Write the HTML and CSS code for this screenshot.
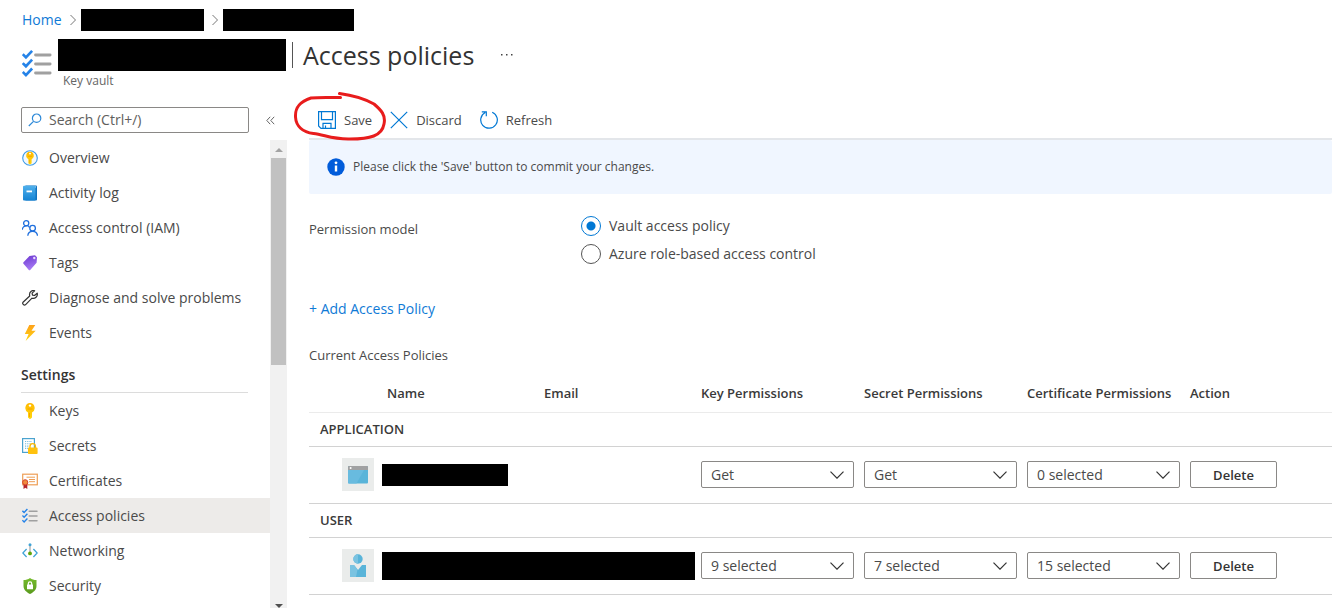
FILE: index.html
```html
<!DOCTYPE html>
<html lang="en">
<head>
<meta charset="utf-8">
<title>Access policies</title>
<link rel="stylesheet" href="styles.css">
</head>
<body>
<svg class="defs" aria-hidden="true">
  <defs>
    <linearGradient id="gKey" x1="0" y1="0" x2="0" y2="1"><stop offset="0" stop-color="#ffb900"/><stop offset="1" stop-color="#ffd70f"/></linearGradient>
    <linearGradient id="gBook" x1="0" y1="0" x2="0" y2="1"><stop offset="0" stop-color="#4fb0ec"/><stop offset="1" stop-color="#1583d3"/></linearGradient>
    <linearGradient id="gTag" x1="0" y1="0" x2="0.3" y2="1"><stop offset="0" stop-color="#6a35cf"/><stop offset="1" stop-color="#a67af4"/></linearGradient>
    <linearGradient id="gBolt" x1="0" y1="0" x2="0" y2="1"><stop offset="0" stop-color="#fea11b"/><stop offset="1" stop-color="#ffd70f"/></linearGradient>
    <linearGradient id="gShield" x1="0" y1="0" x2="0" y2="1"><stop offset="0" stop-color="#76bc2d"/><stop offset="1" stop-color="#5a9a1e"/></linearGradient>
    <symbol id="key" viewBox="0 0 16 16"><path d="M8 0a5 5 0 0 0-2 9.400V14.500L8 16.200l2-1.700V9.400A5 5 0 0 0 8 0z" fill="url(#gKey)"/><circle cx="8" cy="2.600" r="1.200" fill="#fff"/><path d="M5.500 6h5M7.500 10v4" stroke="#f29a00" stroke-width=".8"/></symbol>
    <symbol id="checks" viewBox="0 0 16 16"><path d="M.4 2.800l1.700 1.700L5.400 1M.4 7.500l1.700 1.700 3.300-3.500M.4 12.200l1.700 1.700 3.300-3.500" fill="none" stroke="#2583e8" stroke-width="1.400"/><path d="M7.200 3.200h7.800M7.200 8h7.800M7.200 12.800h7.800" stroke="#a0a0a0" stroke-width="1.500" stroke-linecap="round"/></symbol>
  </defs>
</svg>

<header class="page-header">
  <nav class="breadcrumb" aria-label="Breadcrumb">
    <a href="#">Home</a>
    <svg class="crumb-sep" viewBox="0 0 6 12"><path d="M.5 1l5 5-5 5"/></svg>
    <span class="redacted crumb-one"></span>
    <svg class="crumb-sep" viewBox="0 0 6 12"><path d="M.5 1l5 5-5 5"/></svg>
    <span class="redacted crumb-two"></span>
  </nav>
  <div class="title-row">
    <svg class="title-icon"><use href="#checks"/></svg>
    <div class="title-text">
      <div class="title-line">
        <span class="redacted vault-name"></span>
        <h1><span class="title-bar"></span>Access policies</h1>
        <button class="more" type="button" aria-label="More"><svg viewBox="0 0 14 4"><path d="M1 1h1.500v1.500H1zM6 1h1.500v1.500H6zM11 1h1.500v1.500H11z"/></svg></button>
      </div>
      <p class="subtitle">Key vault</p>
    </div>
  </div>
</header>

<div class="body">
  <aside class="sidebar">
    <div class="search-row">
      <label class="search">
        <svg viewBox="0 0 14 14"><circle cx="8.600" cy="5.200" r="4.200"/><path d="M5.500 8.300L.8 13"/></svg>
        <input type="text" placeholder="Search (Ctrl+/)" aria-label="Search">
      </label>
      <button class="collapse" type="button" aria-label="Collapse menu"><svg viewBox="0 0 9 9"><path d="M4.200.8L.8 4.500l3.400 3.700M8.200.8L4.800 4.500l3.400 3.700"/></svg></button>
    </div>
    <div class="menu-area">
      <nav class="menu" aria-label="Key vault menu">
        <a class="item" href="#"><svg viewBox="0 0 16 16"><circle cx="8" cy="8" r="7.300" fill="#f2f8fd" stroke="#3d9be6" stroke-width="1.100"/><use href="#key" x="1.500" y="1.500" width="13" height="13"/></svg>Overview</a>
        <a class="item" href="#"><svg viewBox="0 0 16 16"><rect x="3" y=".5" width="12" height="15" rx="1" fill="#1173c0"/><rect x="3" y="1.500" width="11" height="1" fill="#fff"/><path d="M2 .8h10.500a1 1 0 0 1 1 1v12.700a1 1 0 0 1-1 1H2a1 1 0 0 1-1-1V1.800a1 1 0 0 1 1-1z" fill="url(#gBook)"/><rect x="4.500" y="5.500" width="5.500" height="1.800" fill="#fff"/></svg>Activity log</a>
        <a class="item" href="#"><svg viewBox="0 0 16 16" fill="none" stroke="#1f6fdd" stroke-width="1.300"><circle cx="4.200" cy="3.300" r="2.600"/><path d="M.3 9.800c.3-5 6.400-5 7.200-2.200"/><circle cx="10.600" cy="8.200" r="2.800"/><path d="M5.800 15.800c.4-6 9.200-6 9.700 0"/></svg>Access control (IAM)</a>
        <a class="item" href="#"><svg viewBox="0 0 16 16"><path d="M1.500 7.200L7.500 1 13 .3l2 2-.4 5.500L8.200 15a1 1 0 0 1-1.400 0L1.500 8.700a1 1 0 0 1 0-1.500z" fill="url(#gTag)"/><circle cx="12.300" cy="3" r="1.200" fill="#e9dcff"/></svg>Tags</a>
        <a class="item" href="#"><svg viewBox="0 0 16 16" fill="none" stroke="#333" stroke-width="1.200" stroke-linejoin="round"><path d="M15.200 3.200l-2.700 2.300-2-.4-.4-2L12.600.7C10.500 0 7.400 1.400 7.500 4.700L7.700 6 1 12.300c-1 1.200.9 3.600 2.400 2.500L10 8.200c3 .9 6-1.600 5.200-5z"/></svg>Diagnose and solve problems</a>
        <a class="item" href="#"><svg viewBox="0 0 16 16"><path d="M7.300 0h6L9.500 5.800h4.200L3.600 16l3-7H2.800z" fill="url(#gBolt)"/></svg>Events</a>
        <h2 class="group-title">Settings</h2>
        <a class="item" href="#"><svg viewBox="0 0 16 16"><use href="#key" width="16" height="16"/></svg>Keys</a>
        <a class="item" href="#"><svg viewBox="0 0 16 16"><rect x=".6" y=".6" width="11.800" height="13.800" fill="#fff" stroke="#4ba3cf" stroke-width="1.200"/><path d="M3 3.500h7M3 5.800h7M3 8.100h4M3 10.400h3" stroke="#79bcdd" stroke-width="1.100" stroke-dasharray="1.200 1"/><path d="M8 10V8.300a2.700 2.700 0 0 1 5.400 0V10" fill="none" stroke="#ffb900" stroke-width="1.400"/><rect x="6" y="9.600" width="9.600" height="6.400" rx=".8" fill="#ffc20e"/></svg>Secrets</a>
        <a class="item" href="#"><svg viewBox="0 0 16 16"><rect x=".7" y="1.200" width="14.600" height="10.600" fill="#fff" stroke="#ee9e55" stroke-width="1.200"/><path d="M4.500 4.200h8.500M7 6.500h6M7 8.700h6" stroke="#ee9e55"/><path d="M1.500 10h3.800v6l-1.900-1.300L1.500 16z" fill="#b4232b"/><circle cx="3.200" cy="9.300" r="2.600" fill="#f08a3c" stroke="#d4412d"/></svg>Certificates</a>
        <a class="item selected" href="#" aria-current="page"><svg viewBox="0 0 16 16"><use href="#checks" width="16" height="16"/></svg>Access policies</a>
        <a class="item" href="#"><svg viewBox="0 0 16 16" fill="none"><path d="M4.600 6L.8 10l3.800 4M11.400 6l3.800 4-3.800 4" stroke="#3fa3d6" stroke-width="1.300"/><path d="M8 2v8" stroke="#999" stroke-width="1.100"/><circle cx="8" cy="1.700" r="1.500" fill="#3fa3d6"/><circle cx="8" cy="10.400" r="1.900" fill="#5ea70a"/></svg>Networking</a>
        <a class="item" href="#"><svg viewBox="0 0 16 16"><path d="M8 0c2 1.500 4 2 6.500 2v6c0 4-3.500 6.500-6.500 8-3-1.500-6.500-4-6.500-8V2C4 2 6 1.500 8 0z" fill="url(#gShield)"/><path d="M6.300 7V5.500a1.700 1.700 0 0 1 3.400 0V7" fill="none" stroke="#fff" stroke-width="1.200"/><rect x="5" y="6.600" width="6" height="4.600" rx=".5" fill="#fff"/></svg>Security</a>
      </nav>
      <div class="scrollbar" aria-hidden="true">
        <svg class="arrow-up" viewBox="0 0 8 4"><path d="M0 4l4-4 4 4z"/></svg>
        <div class="thumb"></div>
        <svg class="arrow-down" viewBox="0 0 8 4"><path d="M0 0h8L4 4z"/></svg>
      </div>
    </div>
  </aside>

  <main class="main">
    <div class="toolbar">
      <button type="button" class="tool"><svg viewBox="0 0 18 18"><path d="M.6.6h16.800v16.800H3L.6 15zM3.500.6v8h11v-8M5 17.400v-5h8v5M7.500 14.500v3"/></svg>Save</button>
      <button type="button" class="tool"><svg viewBox="0 0 18 18"><path d="M.8.8l16.400 16.400M17.200.8L.8 17.200"/></svg>Discard</button>
      <button type="button" class="tool refresh"><svg viewBox="0 0 18 18"><path d="M12.200 1.200A8.300 8.300 0 1 1 5.200 1.500M1.800.8h4.500v4.500"/></svg>Refresh</button>
      <svg class="scribble" viewBox="0 0 94 50" aria-hidden="true"><path d="M47.500 5.500C35 5.500 26 5 18 6 6 10 2 16 2.500 25c.5 9 7 15 18 16.500C32 43 40 47.500 57 47c20 0 32-3 34-15C93 23 88 18 81 12 72 7 58 3 46.500 1.500"/></svg>
    </div>

    <div class="notice" role="status">
      <svg viewBox="0 0 18 18"><circle cx="9" cy="9" r="8.700" fill="#015cda"/><path d="M7.800 7.500h2.400v6H7.800z" fill="#fff"/><circle cx="9" cy="4.800" r="1.400" fill="#fff"/></svg>
      Please click the 'Save' button to commit your changes.
    </div>

    <div class="model" role="radiogroup" aria-labelledby="model-label">
      <span id="model-label" class="model-label">Permission model</span>
      <div class="options">
        <label><input type="radio" name="model" checked>Vault access policy</label>
        <label><input type="radio" name="model">Azure role-based access control</label>
      </div>
    </div>

    <a class="add" href="#">+ Add Access Policy</a>
    <p class="caption" id="caption">Current Access Policies</p>

    <table class="policies" aria-labelledby="caption">
      <colgroup><col class="c-icon"><col class="c-name"><col class="c-name"><col class="c-perm"><col class="c-perm"><col class="c-perm"><col></colgroup>
      <thead>
        <tr><th></th><th>Name</th><th>Email</th><th>Key Permissions</th><th>Secret Permissions</th><th>Certificate Permissions</th><th>Action</th></tr>
      </thead>
      <tbody>
        <tr class="group"><th colspan="7">APPLICATION</th></tr>
        <tr class="entry">
          <td colspan="3"><div class="who"><span class="avatar"><svg viewBox="0 0 20 18"><rect width="20" height="17.500" rx="1" fill="#59b4d9"/><path d="M0 4h16L8.500 17.500H1a1 1 0 0 1-1-1z" fill="#68bbdf"/><path d="M1 0h18a1 1 0 0 1 1 1v3H0V1a1 1 0 0 1 1-1z" fill="#a0a1a2"/><circle cx="2.600" cy="2" r="1" fill="#fff"/></svg></span><span class="redacted app-name"></span></div></td>
          <td><span class="pick"><select aria-label="Key permissions"><option>Get</option></select><svg viewBox="0 0 14 8"><path d="M.5.7L7 7.200 13.500.7"/></svg></span></td>
          <td><span class="pick"><select aria-label="Secret permissions"><option>Get</option></select><svg viewBox="0 0 14 8"><path d="M.5.7L7 7.200 13.500.7"/></svg></span></td>
          <td><span class="pick"><select aria-label="Certificate permissions"><option>0 selected</option></select><svg viewBox="0 0 14 8"><path d="M.5.7L7 7.200 13.500.7"/></svg></span></td>
          <td><button type="button" class="delete">Delete</button></td>
        </tr>
        <tr class="group"><th colspan="7">USER</th></tr>
        <tr class="entry">
          <td colspan="3"><div class="who"><span class="avatar"><svg viewBox="0 0 18 24"><circle cx="9" cy="5" r="4.700" fill="#59b4d9"/><path d="M9 .3a4.700 4.700 0 0 0 0 9.400z" fill="#7ac3e1"/><path d="M1 11h4l4 5 4-5h4v12H1z" fill="#59b4d9"/><path d="M1 11h4l3.500 4.500L7 23H1z" fill="#7ac3e1"/></svg></span><span class="redacted user-name"></span></div></td>
          <td><span class="pick"><select aria-label="Key permissions"><option>9 selected</option></select><svg viewBox="0 0 14 8"><path d="M.5.7L7 7.200 13.500.7"/></svg></span></td>
          <td><span class="pick"><select aria-label="Secret permissions"><option>7 selected</option></select><svg viewBox="0 0 14 8"><path d="M.5.7L7 7.200 13.500.7"/></svg></span></td>
          <td><span class="pick"><select aria-label="Certificate permissions"><option>15 selected</option></select><svg viewBox="0 0 14 8"><path d="M.5.7L7 7.200 13.500.7"/></svg></span></td>
          <td><button type="button" class="delete">Delete</button></td>
        </tr>
      </tbody>
    </table>
  </main>
</div>
</body>
</html>
```

FILE: styles.css
```css
* {
  box-sizing: border-box;
}

body {
  margin: 0;
  height: 100vh;
  display: flex;
  flex-direction: column;
  overflow: hidden;
  background: #fff;
  color: #4a4a4a;
  font: 14px/20px "Open Sans", "Noto Sans", sans-serif;
}

button,
input,
select {
  font: inherit;
  color: inherit;
}

button {
  background: none;
  border: 0;
  padding: 0;
}

a {
  color: #0f7ad6;
  text-decoration: none;
}

svg {
  flex: none;
  display: block;
}

.defs {
  position: absolute;
  width: 0;
  height: 0;
}

.redacted {
  flex: none;
  background: #000;
}

/* Header */
.page-header {
  flex: none;
  padding: 9px 22px 0;
}

.breadcrumb {
  display: flex;
  align-items: center;
  height: 22px;
}

.crumb-sep {
  width: 6px;
  height: 12px;
  margin-left: 8px;
  fill: none;
  stroke: #777;
}

.crumb-one {
  width: 123px;
  height: 22px;
  margin-left: 5px;
}

.crumb-two {
  width: 131px;
  height: 22px;
  margin-left: 5px;
}

.title-row {
  display: flex;
  gap: 6px;
  padding-top: 8px;
}

.title-icon {
  width: 30px;
  height: 30px;
  margin-top: 10px;
}

.title-line {
  display: flex;
  align-items: center;
}

.vault-name {
  width: 228px;
  height: 32px;
}

h1 {
  display: flex;
  align-items: center;
  gap: 10px;
  margin: 0 0 0 6px;
  font-size: 25px;
  line-height: 32px;
  font-weight: 400;
  color: #333;
}

.title-bar {
  width: 1px;
  height: 26px;
  background: #555;
}

.more {
  margin-left: 26px;
}

.more svg {
  width: 14px;
  height: 4px;
  fill: #444;
}

.subtitle {
  margin: 0;
  padding-left: 5px;
  font-size: 12px;
  color: #666;
}

/* Body */
.body {
  flex: 1;
  min-height: 0;
  display: grid;
  grid-template-columns: 287px 1fr;
}

.sidebar {
  display: flex;
  flex-direction: column;
  min-height: 0;
  padding-top: 16px;
}

.search-row {
  display: flex;
  align-items: center;
  gap: 17px;
  padding: 0 12px 7px 21px;
}

.search {
  flex: 1;
  display: flex;
  align-items: center;
  gap: 7px;
  height: 26px;
  padding: 0 6px;
  border: 1px solid #8a8886;
  border-radius: 2px;
}

.search svg {
  width: 14px;
  height: 14px;
  fill: none;
  stroke: #2b88d8;
  stroke-width: 1.2;
}

.search input {
  flex: 1;
  min-width: 0;
  border: 0;
  padding: 0;
  outline: 0;
  background: none;
}

.search input::placeholder {
  color: #605e5c;
  opacity: 1;
}

.collapse svg {
  width: 9px;
  height: 9px;
  fill: none;
  stroke: #666;
}

.menu-area {
  flex: 1;
  min-height: 0;
  display: flex;
}

.menu {
  flex: 1;
  overflow: hidden;
}

.item {
  display: flex;
  align-items: center;
  gap: 11px;
  height: 35px;
  padding-left: 22px;
  color: #4a4a4a;
}

.item svg {
  width: 16px;
  height: 16px;
}

.item.selected {
  background: #edebe9;
}

.group-title {
  margin: 0 22px 0 21px;
  padding: 15px 0 7px;
  border-bottom: 1px solid #dcdcdc;
  font-size: 14px;
  line-height: 20px;
  font-weight: 600;
  color: #333;
}

.scrollbar {
  width: 17px;
  display: flex;
  flex-direction: column;
  align-items: center;
  padding-top: 8px;
  background: #f1f1f1;
}

.arrow-up,
.arrow-down {
  width: 8px;
  height: 4px;
  fill: #a3a3a3;
}

.arrow-down {
  margin-top: auto;
  fill: #505050;
}

.thumb {
  width: 15px;
  height: 45%;
  margin-top: 6px;
  background: #c1c1c1;
}

/* Main */
.main {
  min-width: 0;
  padding-left: 22px;
}

.toolbar {
  position: relative;
  display: flex;
  gap: 18px;
  height: 49px;
  padding: 16px 9px 5px;
  border-bottom: 2px solid #e3e6ea;
}

.tool {
  display: flex;
  align-items: center;
  gap: 8px;
  font-size: 13px;
}

.tool svg {
  width: 18px;
  height: 18px;
  fill: none;
  stroke: #0078d4;
  stroke-width: 1.2;
}

.scribble {
  position: absolute;
  left: -16px;
  top: 1px;
  width: 94px;
  height: 50px;
  fill: none;
  stroke: #e81c1c;
  stroke-width: 3;
  stroke-linecap: round;
}

.notice {
  display: flex;
  align-items: center;
  gap: 8px;
  height: 54px;
  padding-left: 18px;
  border-radius: 2px;
  background: #f0f6ff;
  font-size: 12px;
}

.notice svg {
  width: 18px;
  height: 18px;
}

.model {
  display: flex;
  padding-top: 18px;
}

.model-label {
  width: 272px;
  padding-top: 7px;
  font-size: 13px;
}

.options {
  display: flex;
  flex-direction: column;
}

.options label {
  display: flex;
  align-items: center;
  gap: 8px;
  height: 28px;
}

.options input {
  appearance: none;
  width: 20px;
  height: 20px;
  margin: 0;
  border: 1px solid #555;
  border-radius: 50%;
}

.options input:checked {
  border-color: #0078d4;
  background: radial-gradient(circle, #0078d4 4px, transparent 5px);
}

.add {
  display: block;
  width: max-content;
  margin-top: 31px;
}

.caption {
  margin: 26px 0 0;
  font-size: 13px;
}

.policies {
  width: 100%;
  margin-top: 10px;
  table-layout: fixed;
  border-collapse: collapse;
}

.c-icon {
  width: 78px;
}

.c-name {
  width: 157px;
}

.c-perm {
  width: 163px;
}

.policies th,
.policies td {
  padding: 0;
  text-align: left;
}

.policies th {
  font-size: 13px;
  font-weight: 600;
  color: #3a3a3a;
}

.policies tr {
  border-bottom: 1px solid #d2d2d2;
}

.policies thead tr {
  height: 37px;
  border-bottom-color: #ebebeb;
}

.policies .group {
  height: 34px;
}

.policies .group th {
  padding-left: 11px;
}

.policies .entry {
  height: 57px;
}

.who {
  display: flex;
  align-items: center;
  gap: 8px;
  padding-left: 33px;
}

.avatar {
  flex: none;
  display: grid;
  place-items: center;
  width: 32px;
  height: 33px;
  background: #eaeceb;
}

.avatar svg {
  width: 20px;
  height: 24px;
}

.app-name {
  width: 126px;
  height: 22px;
}

.user-name {
  width: 313px;
  height: 28px;
}

.pick {
  position: relative;
  display: block;
  width: 153px;
}

.pick select {
  appearance: none;
  display: block;
  width: 100%;
  height: 27px;
  padding: 0 28px 0 9px;
  border: 1px solid #8a8886;
  border-radius: 2px;
  background: #fff;
}

.pick svg {
  position: absolute;
  right: 10px;
  top: 10px;
  width: 14px;
  height: 8px;
  fill: none;
  stroke: #333;
  stroke-width: 1.2;
  pointer-events: none;
}

.delete {
  display: block;
  width: 87px;
  height: 27px;
  border: 1px solid #8a8886;
  border-radius: 2px;
  font-size: 13px;
  font-weight: 600;
  color: #333;
}
```
